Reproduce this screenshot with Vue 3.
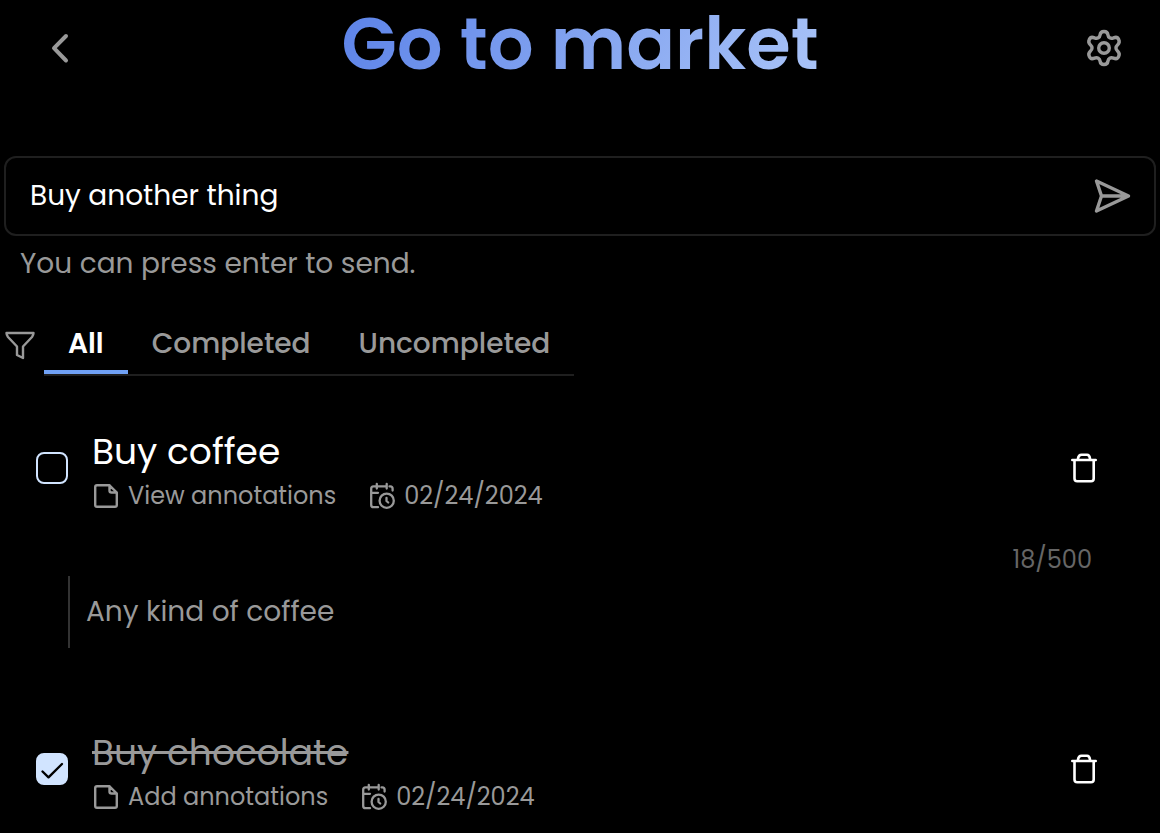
<script setup>
import { ref } from 'vue'

const draft = ref('Buy another thing')
const filters = ['All', 'Completed', 'Uncompleted']
const active = ref('All')
const tasks = ref([
  { id: 1, title: 'Buy coffee', done: false, action: 'View annotations', date: '02/24/2024', open: true, note: 'Any kind of coffee' },
  { id: 2, title: 'Buy chocolate', done: true, action: 'Add annotations', date: '02/24/2024', open: false, note: '' }
])

function remove(id) {
  tasks.value = tasks.value.filter((t) => t.id !== id)
}
</script>

<template>
  <main class="page">
    <header class="header">
      <button class="icon-btn back" type="button" aria-label="Back">
        <svg width="48" height="48" viewBox="0 0 48 48" fill="none" stroke="currentColor" stroke-width="4" stroke-linecap="round" stroke-linejoin="round">
          <path d="M30 12 18 24.200 30 36.500" />
        </svg>
      </button>
      <h1 class="title">Go to market</h1>
      <button class="icon-btn settings" type="button" aria-label="Settings">
        <svg width="40" height="40" viewBox="-20 -20 40 40" fill="none" stroke="currentColor" stroke-width="3.400" stroke-linejoin="round">
          <circle r="5.300" />
          <path d="M0-16.500C2.500-16.500 3.700-15 3.900-13.200C4.200-10.400 6.600-9 9.500-10.100C12.200-11.200 13.700-10.700 14.600-8.600C15.800-6.400 15.400-4.900 13.700-3.300C11.400-1.300 11.400 1.300 13.700 3.300C15.400 4.900 15.800 6.400 14.600 8.600C13.700 10.700 12.200 11.200 9.500 10.100C6.600 9 4.200 10.400 3.900 13.200C3.700 15 2.500 16.500 0 16.500C-2.500 16.500-3.700 15-3.900 13.200C-4.200 10.400-6.600 9-9.500 10.100C-12.200 11.200-13.700 10.700-14.600 8.600C-15.800 6.400-15.400 4.900-13.700 3.300C-11.400 1.300-11.400-1.300-13.700-3.300C-15.400-4.900-15.800-6.400-14.600-8.600C-13.700-10.700-12.200-11.200-9.500-10.100C-6.600-9-4.200-10.400-3.900-13.200C-3.700-15-2.500-16.500 0-16.500Z" />
        </svg>
      </button>
    </header>

    <form class="composer" @submit.prevent>
      <div class="field">
        <input id="draft" v-model="draft" class="draft" type="text" aria-label="New task" aria-describedby="hint" />
        <button class="icon-btn" type="submit" aria-label="Send">
          <svg width="40" height="40" viewBox="0 0 40 40" fill="none" stroke="currentColor" stroke-width="3.400" stroke-linecap="round" stroke-linejoin="round">
            <path d="M4.500 5 36.500 20 4.500 35 9.500 20ZM9.500 20H36.500" />
          </svg>
        </button>
      </div>
      <p id="hint" class="hint">You can press enter to send.</p>
    </form>

    <nav class="filters" aria-label="Filter tasks">
      <svg class="funnel" width="32" height="32" viewBox="0 0 32 32" fill="none" stroke="currentColor" stroke-width="2.400" stroke-linejoin="round">
        <path d="M2.500 4H29.500Q29.500 6 28 8L19 17.500V29L13 26V17.500L4 8Q2.500 6 2.500 4Z" />
      </svg>
      <div class="tabs">
        <button v-for="f in filters" :key="f" type="button" class="tab" :class="{ active: f === active }" @click="active = f">{{ f }}</button>
      </div>
    </nav>

    <ul class="list">
      <li v-for="t in tasks" :key="t.id" class="item">
        <div class="row">
          <span class="check">
            <input :id="'task-' + t.id" v-model="t.done" class="box" type="checkbox" />
            <svg v-if="t.done" class="tick" width="32" height="32" viewBox="0 0 32 32" fill="none" stroke="currentColor" stroke-width="2.400" stroke-linecap="round" stroke-linejoin="round">
              <path d="M6.500 18.500 12.500 24.300 26 11" />
            </svg>
          </span>
          <div class="body">
            <label class="name" :class="{ done: t.done }" :for="'task-' + t.id">{{ t.title }}</label>
            <div class="meta">
              <button class="meta-btn" type="button" @click="t.open = !t.open">
                <svg width="28" height="28" viewBox="0 0 28 28" fill="none" stroke="currentColor" stroke-width="2.400" stroke-linecap="round" stroke-linejoin="round">
                  <path d="M17.500 3.300H5Q3.200 3.300 3.200 5V23Q3.200 24.800 5 24.800H23Q24.800 24.800 24.800 23V10.500ZM17.500 3.300V8.500Q17.500 10.500 19.500 10.500H24.800" />
                </svg>
                {{ t.action }}
              </button>
              <span class="date">
                <svg width="28" height="28" viewBox="0 0 28 28" fill="none" stroke="currentColor" stroke-width="2.300" stroke-linecap="round" stroke-linejoin="round">
                  <path d="M8.800 2V6.500M18.700 2V6.500M10 25.200H5.500Q3.200 25.200 3.200 23V6.800Q3.200 4.400 5.500 4.400H18.500M21.500 4.400H22.300Q24.600 4.400 24.600 6.800V8.500M3.200 10.800H10M18.500 16V19L20.200 20.500" />
                  <circle cx="18.700" cy="18.700" r="7.100" />
                </svg>
                <time datetime="2024-02-24">{{ t.date }}</time>
              </span>
            </div>
          </div>
          <button class="icon-btn trash" type="button" aria-label="Delete task" @click="remove(t.id)">
            <svg width="32" height="32" viewBox="0 0 32 32" fill="none" stroke="currentColor" stroke-width="2.600" stroke-linecap="round" stroke-linejoin="round">
              <path d="M4.300 8H27.700M6.500 8V26.500Q6.500 29.300 9.300 29.300H23Q25.700 29.300 25.700 26.500V8M10 8V6.500Q10.500 2.700 13.500 2.700H19Q21.500 2.700 22 6.500V8" />
            </svg>
          </button>
        </div>
        <div v-if="t.open" class="notes">
          <span class="count">{{ t.note.length }}/500</span>
          <textarea v-model="t.note" class="note" rows="1" maxlength="500" aria-label="Annotations"></textarea>
        </div>
      </li>
    </ul>
  </main>
</template>

<style>
html,
body {
  background: #000;
}
</style>

<style scoped>
.page {
  font-family: Poppins, Inter, "Open Sans", sans-serif;
  font-size: 28px;
  line-height: 40px;
  color: #999;
  padding: 0 4px;
}
.page * {
  box-sizing: border-box;
}
button,
input,
textarea {
  font: inherit;
  color: inherit;
  background: none;
  border: 0;
  margin: 0;
  padding: 0;
}
button {
  cursor: pointer;
}
svg {
  display: block;
  flex: none;
}
.icon-btn {
  display: block;
  flex: none;
}
.header {
  display: grid;
  grid-template-columns: 1fr auto 1fr;
  align-items: center;
  padding: 0 32px;
}
.back {
  justify-self: start;
}
.settings {
  justify-self: end;
}
.title {
  margin: 0;
  padding-bottom: 8px;
  font-size: 72px;
  line-height: 88px;
  font-weight: 600;
  background: linear-gradient(120deg, #5b82e8, #abc5f8);
  -webkit-background-clip: text;
  background-clip: text;
  color: transparent;
}
.composer {
  margin-top: 60px;
}
.field {
  display: flex;
  align-items: center;
  height: 80px;
  padding: 0 22px 0 24px;
  border: 2px solid #1f1f1f;
  border-radius: 12px;
}
.draft {
  flex: 1;
  min-width: 0;
  color: #fff;
  outline: none;
}
.hint {
  margin: 8px 16px 0;
}
.filters {
  display: flex;
  align-items: flex-start;
  margin-top: 28px;
}
.funnel {
  margin: 17px 8px 0 0;
}
.tabs {
  display: flex;
  border-bottom: 2px solid #1f1f1f;
}
.tab {
  padding: 12px 24px 6px;
  border-bottom: 4px solid transparent;
  font-weight: 500;
}
.tab.active {
  color: #fff;
  font-weight: 600;
  border-color: #70a1f5;
}
.list {
  list-style: none;
  margin: 50px 0 0;
  padding: 0;
}
.item {
  padding: 0 56px 0 32px;
}
.item + .item {
  margin-top: 79px;
}
.row {
  display: flex;
  align-items: center;
  gap: 24px;
}
.check {
  display: grid;
  flex: none;
}
.box,
.tick {
  grid-area: 1 / 1;
}
.box {
  appearance: none;
  width: 32px;
  height: 32px;
  border: 2px solid #d1e4ff;
  border-radius: 8px;
}
.box:checked {
  background: #d1e4ff;
}
.tick {
  color: #000;
  pointer-events: none;
}
.body {
  flex: 1;
  min-width: 0;
}
.name {
  display: block;
  width: fit-content;
  margin-bottom: 4px;
  font-size: 36px;
  line-height: 52px;
  color: #fff;
}
.name.done {
  color: #999;
  text-decoration: line-through;
  text-decoration-thickness: 3px;
}
.meta {
  display: flex;
  gap: 32px;
  font-size: 24px;
  line-height: 28px;
}
.meta-btn,
.date {
  display: flex;
  align-items: center;
  gap: 8px;
}
.trash {
  color: #fff;
}
.notes {
  display: flex;
  flex-direction: column;
  margin-top: 34px;
}
.count {
  align-self: flex-end;
  margin-right: 8px;
  font-size: 24px;
  line-height: 32px;
  color: #666;
}
.note {
  margin-left: 32px;
  height: 72px;
  padding: 16px;
  border-left: 2px solid #333;
  resize: none;
  outline: none;
  overflow: hidden;
}
</style>
